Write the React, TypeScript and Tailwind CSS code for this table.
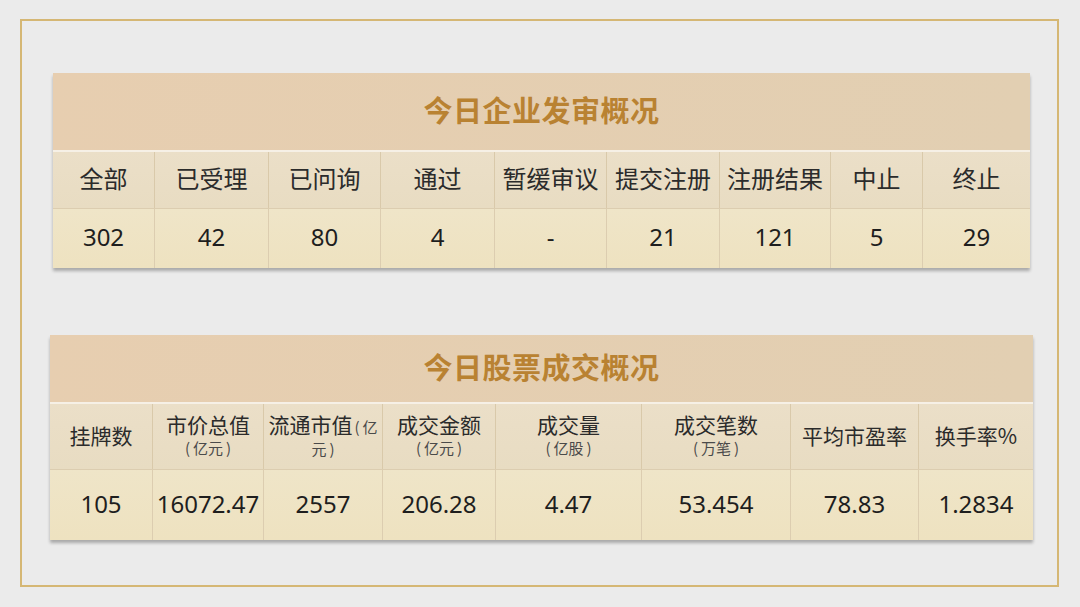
const font = { fontFamily: '"Noto Sans CJK SC", "Noto Sans", sans-serif' };
const numFont = { fontFamily: '"Noto Sans", "Noto Sans CJK SC", sans-serif' };

interface Col {
  label: string;
  unit?: string;
  inlineUnit?: boolean;
  value: string;
}

const reviewCols: Col[] = [
  { label: "全部", value: "302" },
  { label: "已受理", value: "42" },
  { label: "已问询", value: "80" },
  { label: "通过", value: "4" },
  { label: "暂缓审议", value: "-" },
  { label: "提交注册", value: "21" },
  { label: "注册结果", value: "121" },
  { label: "中止", value: "5" },
  { label: "终止", value: "29" },
];

const tradeCols: Col[] = [
  { label: "挂牌数", value: "105" },
  { label: "市价总值", unit: "亿元", value: "16072.47" },
  { label: "流通市值", unit: "亿元", inlineUnit: true, value: "2557" },
  { label: "成交金额", unit: "亿元", value: "206.28" },
  { label: "成交量", unit: "亿股", value: "4.47" },
  { label: "成交笔数", unit: "万笔", value: "53.454" },
  { label: "平均市盈率", value: "78.83" },
  { label: "换手率%", value: "1.2834" },
];

function Unit({ text }: { text: string }) {
  return (
    <span className="whitespace-nowrap text-[15px] text-[#4a4a4a]">
      <span className="mr-[3px]">(</span>
      {text}
      <span className="ml-[3px]">)</span>
    </span>
  );
}

function HeaderCell({ col, last, size }: { col: Col; last: boolean; size: string }) {
  return (
    <div
      className={`flex flex-col items-center justify-center text-center ${size} text-[#2b2b2b] pb-[4px] ${
        last ? "" : "border-r border-[#d9c9aa]"
      }`}
    >
      {col.unit && col.inlineUnit ? (
        <>
          <div className="leading-[24px] whitespace-nowrap">
            {col.label}
            <span className="text-[15px] text-[#4a4a4a] ml-[2px]">
              <span className="mr-[3px]">(</span>
              {col.unit.slice(0, 1)}
            </span>
          </div>
          <div className="text-[15px] leading-[19px] text-[#4a4a4a] whitespace-nowrap">
            {col.unit.slice(1)}
            <span className="ml-[3px]">)</span>
          </div>
        </>
      ) : (
        <>
          <div className="leading-[24px]">{col.label}</div>
          {col.unit && (
            <div className="leading-[19px]">
              <Unit text={col.unit} />
            </div>
          )}
        </>
      )}
    </div>
  );
}

function StatTable({
  title,
  cols,
  template,
  titleH,
  headH,
  dataH,
  headSize,
  className,
}: {
  title: string;
  cols: Col[];
  template: string;
  titleH: string;
  headH: string;
  dataH: string;
  headSize: string;
  className: string;
}) {
  return (
    <div className={`shadow-[0_3px_3px_rgba(0,0,0,0.28)] ${className}`}>
      <div
        className={`${titleH} flex items-center justify-center pb-[3px] bg-gradient-to-r from-[#e7ceb0] to-[#e2cfb2] border-b-2 border-[#f6f0e6]`}
      >
        <span className="text-[29px] font-bold text-[#b98232] tracking-[0.5px]">{title}</span>
      </div>
      <div className={`grid ${template} ${headH} bg-gradient-to-b from-[#ebdfc8] to-[#e8dcc2] border-b border-[#dccdb0]`}>
        {cols.map((c, i) => (
          <HeaderCell key={c.label} col={c} last={i === cols.length - 1} size={headSize} />
        ))}
      </div>
      <div className={`grid ${template} ${dataH} bg-gradient-to-b from-[#efe5c8] to-[#eee2c0]`}>
        {cols.map((c, i) => (
          <div
            key={c.label}
            style={numFont}
            className={`flex items-center justify-center pb-[3px] text-[24px] text-[#1e1e1e] ${
              i === cols.length - 1 ? "" : "border-r border-[#dccdb0]"
            }`}
          >
            {c.value}
          </div>
        ))}
      </div>
    </div>
  );
}

export default function App() {
  return (
    <div className="w-[1080px] h-[607px] bg-[#ebebeb] pt-[19px] pl-[20px]" style={font}>
      <div className="w-[1039px] h-[568px] border-2 border-[#d5b774] flex flex-col">
        <StatTable
          title="今日企业发审概况"
          cols={reviewCols}
          template="grid-cols-[102px_114px_112px_114px_112px_113px_111px_92px_107px]"
          titleH="h-[79px]"
          headH="h-[57px]"
          dataH="h-[59px]"
          headSize="text-[24px]"
          className="ml-[31px] mt-[52px] w-[977px]"
        />
        <StatTable
          title="今日股票成交概况"
          cols={tradeCols}
          template="grid-cols-[103px_111px_119px_113px_146px_149px_128px_114px]"
          titleH="h-[69px]"
          headH="h-[66px]"
          dataH="h-[70px]"
          headSize="text-[21px]"
          className="ml-[28px] mt-[67px] w-[983px]"
        />
      </div>
    </div>
  );
}
